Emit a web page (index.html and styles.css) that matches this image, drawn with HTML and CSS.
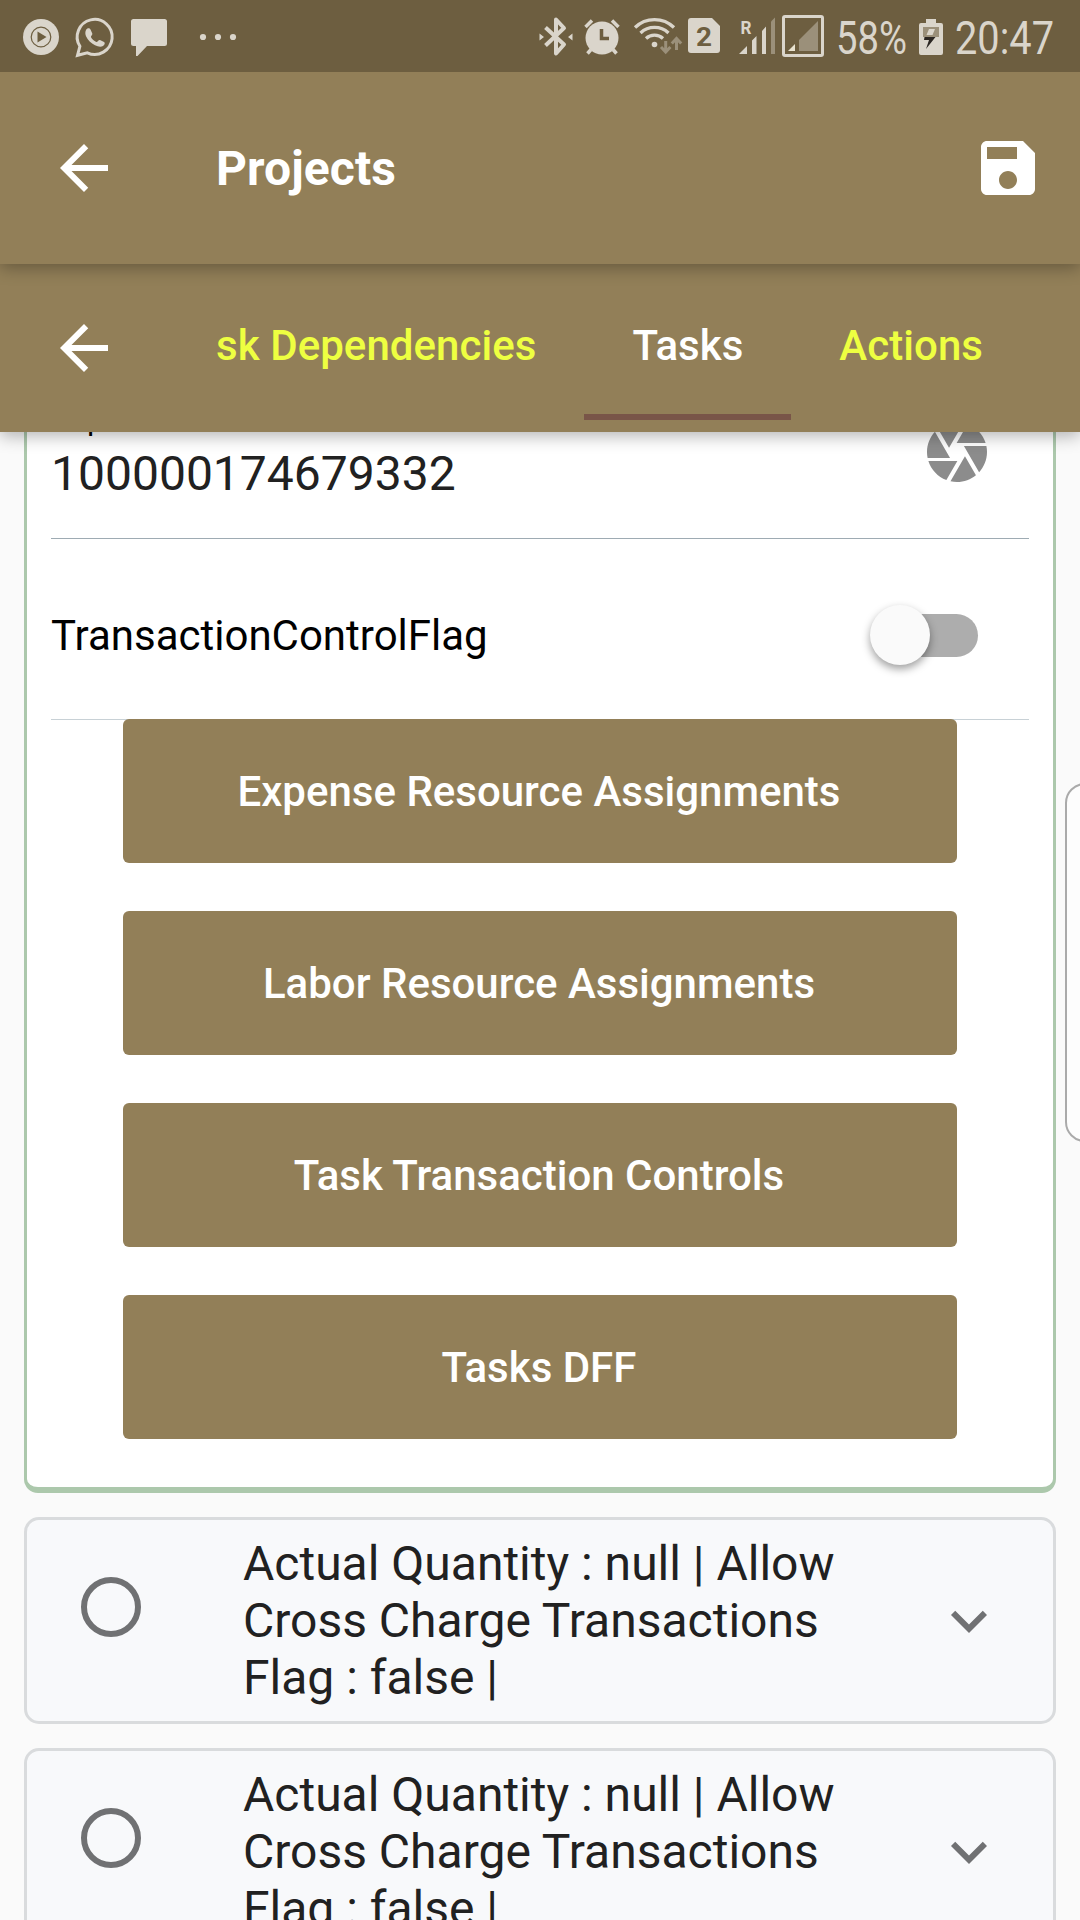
FILE: index.html
```html
<!DOCTYPE html>
<html lang="en">
<head>
<meta charset="utf-8">
<title>Projects</title>
<link rel="stylesheet" href="styles.css">
</head>
<body>
<div class="screen">
  <div class="status-bar">
    <div class="status-group">
      <svg class="s-play" width="36" height="42" viewBox="23 16 36 42"><circle cx="41" cy="37" r="18" fill="#dad5cb"/><circle cx="41" cy="37" r="9.8" fill="none" stroke="#6d5e40" stroke-width="1.2"/><path d="M37.5 31.5v11l9-5.500z" fill="#6d5e40"/></svg>
      <svg class="s-whatsapp" width="40" height="42" viewBox="75 16 40 42"><path d="M77.500 55.300l2.400-9A17.500 17.500 0 1 1 87.300 52.800z" fill="none" stroke="#dad5cb" stroke-width="3"/><path d="M86 30c1-2 3.500-2.500 4.500-.5l1.800 4c.5 1.500-1.800 2.500-1.300 3.800 1.200 2 3 3.700 5.300 4.700 1.200.4 2.200-2.500 3.700-2l4 2c1.500.9.600 3-1 4-2 1.200-5 .8-8-.7-4-2-7.200-5.200-9-9-.9-2.300-.9-4.500 0-6.300z" fill="#dad5cb"/></svg>
      <svg class="s-chat" width="36" height="42" viewBox="131 16 36 42"><path d="M133.500 19h31a2.500 2.500 0 0 1 2.500 2.500v22a2.500 2.500 0 0 1-2.500 2.500H147l-9.500 10H136V46h-2.500a2.500 2.500 0 0 1-2.500-2.500v-22a2.500 2.500 0 0 1 2.500-2.500z" fill="#dad5cb"/></svg>
      <svg class="s-dots" width="38" height="42" viewBox="199 16 38 42" fill="#dad5cb"><circle cx="203" cy="37" r="3.100"/><circle cx="218" cy="37" r="3.100"/><circle cx="233" cy="37" r="3.100"/></svg>
    </div>
    <div class="status-group">
      <svg class="s-bt" width="34" height="42" viewBox="539 15 34 42"><path d="M545.500 27.500l18.500 17-8 9V19.500l8 8.500-18.500 17.500" fill="none" stroke="#dad5cb" stroke-width="4" stroke-linejoin="round"/><path d="M539.500 33.500l4.500 3.500-4.500 3.500zM572.500 33.500L568 37l4.500 3.500z" fill="#dad5cb"/></svg>
      <svg class="s-alarm" width="36" height="42" viewBox="584 15 36 42"><circle cx="602" cy="38" r="16.500" fill="#dad5cb"/><path d="M585.500 27l6.500-6.500M618.500 27l-6.500-6.500M591 49.500l-3.500 4M613 49.500l3.500 4" stroke="#dad5cb" stroke-width="3.500" fill="none"/><path d="M601.500 29v9.500h7.500" stroke="#6d5e40" stroke-width="3.500" fill="none"/></svg>
      <svg class="s-wifi" width="48" height="42" viewBox="634 15 48 42"><g fill="none" stroke="#dad5cb" stroke-width="3.300"><path d="M635 27.500a28 28 0 0 1 39 0"/><path d="M640.500 33a20.500 20.500 0 0 1 28 0"/><path d="M646 38.500a12.500 12.500 0 0 1 17 0"/></g><circle cx="654.500" cy="44.500" r="2.800" fill="#dad5cb"/><path d="M665.700 41v10M661 47l4.700 5 4.700-5M676.500 50V39.500M671.800 43.500l4.700-5 4.700 5" fill="none" stroke="#9b907a" stroke-width="3"/></svg>
      <svg class="s-sim" width="32" height="42" viewBox="688 15 32 42"><path d="M691 18h21l8 8v24a3 3 0 0 1-3 3h-26a3 3 0 0 1-3-3V21a3 3 0 0 1 3-3z" fill="#dad5cb"/><text class="sim-number" x="696" y="45.500" fill="#6d5e40" textLength="16" lengthAdjust="spacingAndGlyphs">2</text></svg>
      <svg class="s-signal" width="37" height="42" viewBox="739 15 37 42"><text class="roam" x="740.500" y="33.500" fill="#dad5cb" textLength="11" lengthAdjust="spacingAndGlyphs">R</text><path d="M739 54l8-8v8zM752 40.500l4.500-4.500v18H752zM762 31l4-4.500V54h-4z" fill="#dad5cb"/><path d="M771 21.500l4-4V54h-4z" fill="#9b907a"/></svg>
      <svg class="s-box" width="42" height="42" viewBox="782 15 42 42"><rect x="783.500" y="16.500" width="39" height="39" rx="1.500" fill="none" stroke="#dad5cb" stroke-width="3"/><path d="M788 51l7-7v7z" fill="#e9e3d0"/><path d="M799 40l19-19v30h-19z" fill="#9b907a"/></svg>
      <svg class="s-percent" width="70" height="42" viewBox="837 15 70 42"><text class="status-text" x="836" y="54" textLength="71" lengthAdjust="spacingAndGlyphs">58%</text></svg>
      <svg class="s-battery" width="24" height="42" viewBox="919 15 24 42"><path d="M926 19h10v4h5a2 2 0 0 1 2 2v28a2 2 0 0 1-2 2h-20a2 2 0 0 1-2-2V25a2 2 0 0 1 2-2h5z" fill="#dad5cb"/><path d="M923 27h16v10h-16z" fill="#9b907a"/><path d="M929 29h6l-2.500 6h-6z" fill="#dad5cb"/><path d="M924.500 37h11l-9.500 12 3-9h-5z" fill="#2b2622"/></svg>
      <svg class="s-time" width="98" height="42" viewBox="956 15 98 42"><text class="status-text" x="955" y="54" textLength="99" lengthAdjust="spacingAndGlyphs">20:47</text></svg>
    </div>
  </div>

  <header class="app-bar">
    <svg class="icon" viewBox="0 0 24 24"><path d="M20 11H7.830l5.590-5.590L12 4l-8 8 8 8 1.410-1.410L7.830 13H20v-2z"/></svg>
    <h1 class="title">Projects</h1>
    <svg class="icon save" viewBox="0 0 24 24"><path d="M17 3H5c-1.110 0-2 .9-2 2v14c0 1.100.89 2 2 2h14c1.100 0 2-.9 2-2V7l-4-4zm-5 16c-1.660 0-3-1.340-3-3s1.340-3 3-3 3 1.340 3 3-1.340 3-3 3zm3-10H5V5h10v4z"/></svg>
  </header>

  <nav class="tab-bar">
    <svg class="icon" viewBox="0 0 24 24"><path d="M20 11H7.830l5.590-5.590L12 4l-8 8 8 8 1.410-1.410L7.830 13H20v-2z"/></svg>
    <div class="tabs">
      <a class="tab">Task Dependencies</a>
      <a class="tab active">Tasks</a>
      <a class="tab">Actions</a>
    </div>
  </nav>

  <main class="content">
    <section class="card expanded">
      <div class="field">
        <div class="field-text">
          <div class="field-label">Report</div>
          <div class="field-value">100000174679332</div>
        </div>
        <svg class="camera" viewBox="0 0 24 24"><path d="M9.400 10.500l4.770-8.260C13.470 2.090 12.750 2 12 2c-2.400 0-4.600.85-6.320 2.250l3.660 6.350.06-.1zM21.540 9c-.92-2.920-3.150-5.260-6-6.340L11.880 9h9.660zm.26 1h-7.490l.29.5 4.760 8.250C20.980 16.980 22 14.610 22 12c0-.69-.07-1.350-.2-2zM8.540 12l-3.900-6.750C3.010 7.030 2 9.390 2 12c0 .69.07 1.350.2 2h7.490l-1.150-2zm-6.080 3c.92 2.920 3.150 5.260 6 6.340L12.120 15H2.460zm11.270 0l-3.900 6.760c.7.15 1.420.24 2.170.24 2.400 0 4.600-.85 6.320-2.250l-3.660-6.350-.93 1.600z"/></svg>
      </div>
      <div class="switch-row">
        <span>TransactionControlFlag</span>
        <span class="switch"><span class="thumb"></span></span>
      </div>
      <div class="buttons">
        <button class="btn">Expense Resource Assignments</button>
        <button class="btn">Labor Resource Assignments</button>
        <button class="btn">Task Transaction Controls</button>
        <button class="btn">Tasks DFF</button>
      </div>
    </section>
    <section class="card item">
      <span class="radio"></span>
      <p class="item-text">Actual Quantity : null | Allow Cross Charge Transactions Flag : false |</p>
      <svg class="chevron" viewBox="0 0 24 24"><path d="M16.590 8.590L12 13.170 7.410 8.590 6 10l6 6 6-6z"/></svg>
    </section>
    <section class="card item">
      <span class="radio"></span>
      <p class="item-text">Actual Quantity : null | Allow Cross Charge Transactions Flag : false |</p>
      <svg class="chevron" viewBox="0 0 24 24"><path d="M16.590 8.590L12 13.170 7.410 8.590 6 10l6 6 6-6z"/></svg>
    </section>
  </main>
  <div class="edge-handle"></div>
</div>
</body>
</html>
```

FILE: styles.css
```css
* { box-sizing: border-box; }

body {
  margin: 0;
  font-family: Roboto, "Liberation Sans", sans-serif;
  background: #fafafa;
}

.screen {
  position: relative;
  display: flex;
  flex-direction: column;
  width: 1080px;
  height: 1920px;
  overflow: hidden;
}

svg { display: block; flex: none; overflow: visible; }

/* Status bar */
.status-bar {
  display: flex;
  justify-content: space-between;
  align-items: flex-start;
  height: 72px;
  flex: none;
  padding: 15px 26px 0 23px;
  background: #6d5e40;
  z-index: 4;
}
.status-group { display: flex; }
.status-group:first-child { margin-top: 1px; }
.s-whatsapp { margin-left: 16px; }
.s-chat { margin-left: 16px; }
.s-dots { margin-left: 32px; }
.s-alarm { margin-left: 11px; }
.s-wifi { margin-left: 14px; }
.s-sim { margin-left: 6px; }
.s-signal { margin-left: 19px; }
.s-box { margin-left: 6px; }
.s-percent { margin-left: 13px; }
.s-battery { margin-left: 12px; }
.s-time { margin-left: 13px; }
.status-text { font-size: 46px; fill: #dad5cb; }
.sim-number { font-size: 26px; font-weight: 700; }
.roam { font-size: 18px; font-weight: 700; }

/* App bar and tabs */
.app-bar, .tab-bar {
  display: flex;
  flex: none;
  padding: 0 36px 0 48px;
  background: #927f58;
}
.app-bar {
  height: 192px;
  padding-top: 60px;
  z-index: 3;
  box-shadow: 0 4px 16px rgba(0, 0, 0, .3);
}
.tab-bar {
  height: 168px;
  padding-right: 0;
  z-index: 2;
  box-shadow: 0 4px 16px rgba(0, 0, 0, .3);
}
.icon { width: 72px; height: 72px; fill: #fff; }
.tab-bar .icon { margin-top: 48px; }
.title {
  flex: 1;
  margin: 1px 0 0 96px;
  font-size: 48px;
  font-weight: 700;
  line-height: 72px;
  letter-spacing: .1px;
  color: #fff;
}
.tabs {
  display: flex;
  justify-content: flex-end;
  flex: 1;
  height: 156px;
  margin-left: 96px;
  padding-right: 49px;
  overflow: hidden;
}
.tab {
  flex: none;
  padding: 58px 48px 0;
  font-size: 42px;
  font-weight: 500;
  line-height: 48px;
  letter-spacing: .05px;
  color: #eeff41;
}
.tab.active { color: #fff; border-bottom: 6px solid #795548; }

/* Cards */
.content {
  display: flex;
  flex-direction: column;
  gap: 24px;
  padding: 0 24px;
}
.card { flex: none; border: 3px solid #d9dbdd; border-radius: 15px; }
.expanded {
  height: 1061px;
  padding: 0 24px;
  background: #fff;
  border: solid #acc8ac;
  border-width: 0 3px 6px;
  border-radius: 0 0 14px 14px;
}
.field {
  display: flex;
  justify-content: space-between;
  height: 107px;
  padding-right: 36px;
  border-bottom: 1px solid #9eabb3;
}
.field-label {
  margin-top: -33px;
  font-size: 31.5px;
  line-height: 42px;
  color: #000;
}
.field-value { margin-top: 5px; font-size: 48px; line-height: 56px; color: #212121; }
.camera { width: 72px; height: 72px; margin-top: -16px; fill: #8c8c8c; }
.switch-row {
  display: flex;
  justify-content: space-between;
  align-items: center;
  height: 181px;
  padding: 12px 51px 0 0;
  border-bottom: 1px solid #c8d1d6;
  font-size: 42px;
  color: #000;
}
.switch {
  display: flex;
  align-items: center;
  width: 99px;
  height: 43px;
  border-radius: 22px;
  background: #adadad;
}
.thumb {
  flex: none;
  width: 60px;
  height: 60px;
  margin-left: -9px;
  border-radius: 50%;
  background: #fafafa;
  box-shadow: 0 4px 9px rgba(0, 0, 0, .38);
}
.buttons {
  display: flex;
  flex-direction: column;
  gap: 48px;
  margin: -1px 72px 0;
}
.btn {
  height: 144px;
  padding: 2px 2px 0 0;
  border: 0;
  border-radius: 6px;
  background: #927f58;
  font: 500 42px/48px Roboto, "Liberation Sans", sans-serif;
  color: #fff;
}
.item {
  display: flex;
  height: 207px;
  background: #f8f9fb;
}
.radio {
  width: 60px;
  height: 60px;
  flex: none;
  margin: 57px 0 0 54px;
  border: 6px solid #707173;
  border-radius: 50%;
}
.item-text {
  width: 650px;
  margin: 15px 0 0 102px;
  font-size: 48px;
  line-height: 57px;
  color: #212121;
}
.chevron { width: 72px; height: 72px; margin: 65px 0 0 40px; fill: #707173; }

/* Edge panel handle floating over the page */
.edge-handle {
  position: absolute;
  top: 783px;
  left: 1065px;
  width: 40px;
  height: 359px;
  border: 2px solid #aaa;
  border-radius: 20px;
  background: #fdfdfd;
}
```
